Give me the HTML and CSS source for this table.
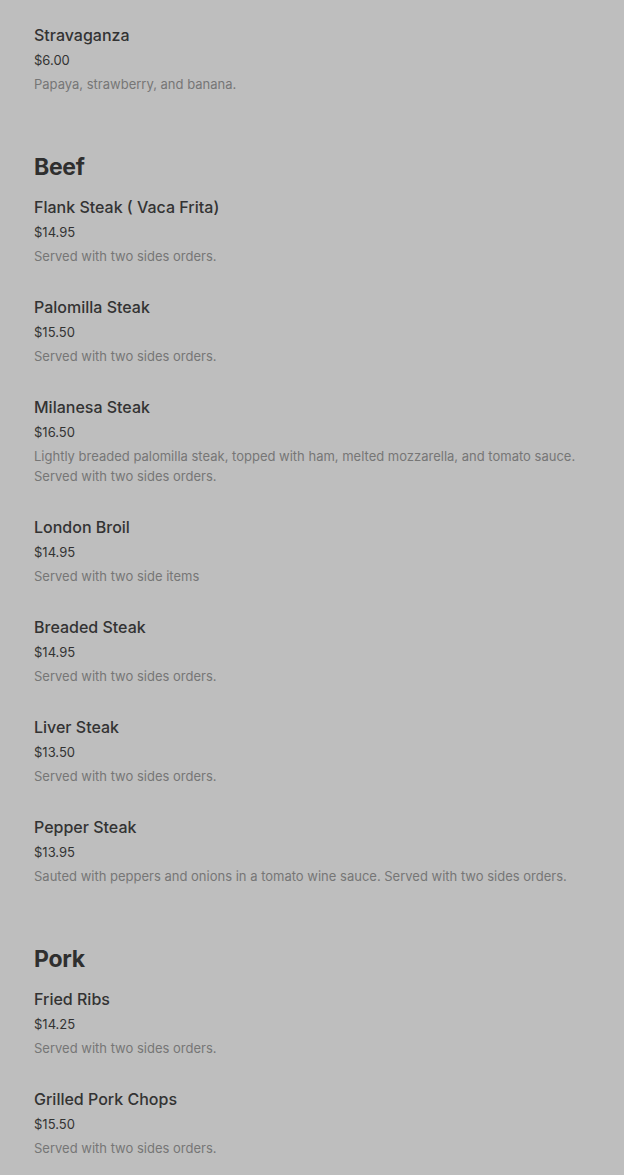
FILE: index.html
```html
<!DOCTYPE html>
<html>
<head>
<meta charset="utf-8">
<link rel="stylesheet" href="styles.css">
</head>
<body>
<div class="menu">
  <section class="section">
    <div class="items">
      <div class="item"><div class="name">Stravaganza</div><div class="price">$6.00</div><div class="desc">Papaya, strawberry, and banana.</div></div>
    </div>
  </section>
  <section class="section">
    <h2 class="heading">Beef</h2>
    <div class="items">
      <div class="item"><div class="name">Flank Steak ( Vaca Frita)</div><div class="price">$14.95</div><div class="desc">Served with two sides orders.</div></div>
      <div class="item"><div class="name">Palomilla Steak</div><div class="price">$15.50</div><div class="desc">Served with two sides orders.</div></div>
      <div class="item"><div class="name">Milanesa Steak</div><div class="price">$16.50</div><div class="desc">Lightly breaded palomilla steak, topped with ham, melted mozzarella, and tomato sauce. Served with two sides orders.</div></div>
      <div class="item"><div class="name">London Broil</div><div class="price">$14.95</div><div class="desc">Served with two side items</div></div>
      <div class="item"><div class="name">Breaded Steak</div><div class="price">$14.95</div><div class="desc">Served with two sides orders.</div></div>
      <div class="item"><div class="name">Liver Steak</div><div class="price">$13.50</div><div class="desc">Served with two sides orders.</div></div>
      <div class="item"><div class="name">Pepper Steak</div><div class="price">$13.95</div><div class="desc">Sauted with peppers and onions in a tomato wine sauce. Served with two sides orders.</div></div>
    </div>
  </section>
  <section class="section">
    <h2 class="heading">Pork</h2>
    <div class="items">
      <div class="item"><div class="name">Fried Ribs</div><div class="price">$14.25</div><div class="desc">Served with two sides orders.</div></div>
      <div class="item"><div class="name">Grilled Pork Chops</div><div class="price">$15.50</div><div class="desc">Served with two sides orders.</div></div>
    </div>
  </section>
</div>
</body>
</html>
```
FILE: styles.css
```css
html, body {
  margin: 0;
  padding: 0;
  background: #bebebe;
}
body {
  font-family: "Inter", "Roboto", sans-serif;
  color: #333333;
}
.menu {
  padding: 23px 10px 0 34px;
  display: flex;
  flex-direction: column;
  gap: 57px;
}
.section {
  display: flex;
  flex-direction: column;
  gap: 12px;
}
.heading {
  margin: 0;
  font-size: 23px;
  line-height: 32px;
  font-weight: 700;
  color: #2f2f2f;
  letter-spacing: -0.3px;
}
.items {
  display: flex;
  flex-direction: column;
  gap: 29px;
}
.item {
  display: flex;
  flex-direction: column;
}
.name {
  font-size: 16px;
  line-height: 24px;
  font-weight: 500;
  color: #333333;
}
.price {
  margin-top: 3px;
  font-size: 13px;
  line-height: 20px;
  color: #333333;
}
.desc {
  margin-top: 4px;
  font-size: 13px;
  line-height: 20px;
  color: #767676;
}
```
